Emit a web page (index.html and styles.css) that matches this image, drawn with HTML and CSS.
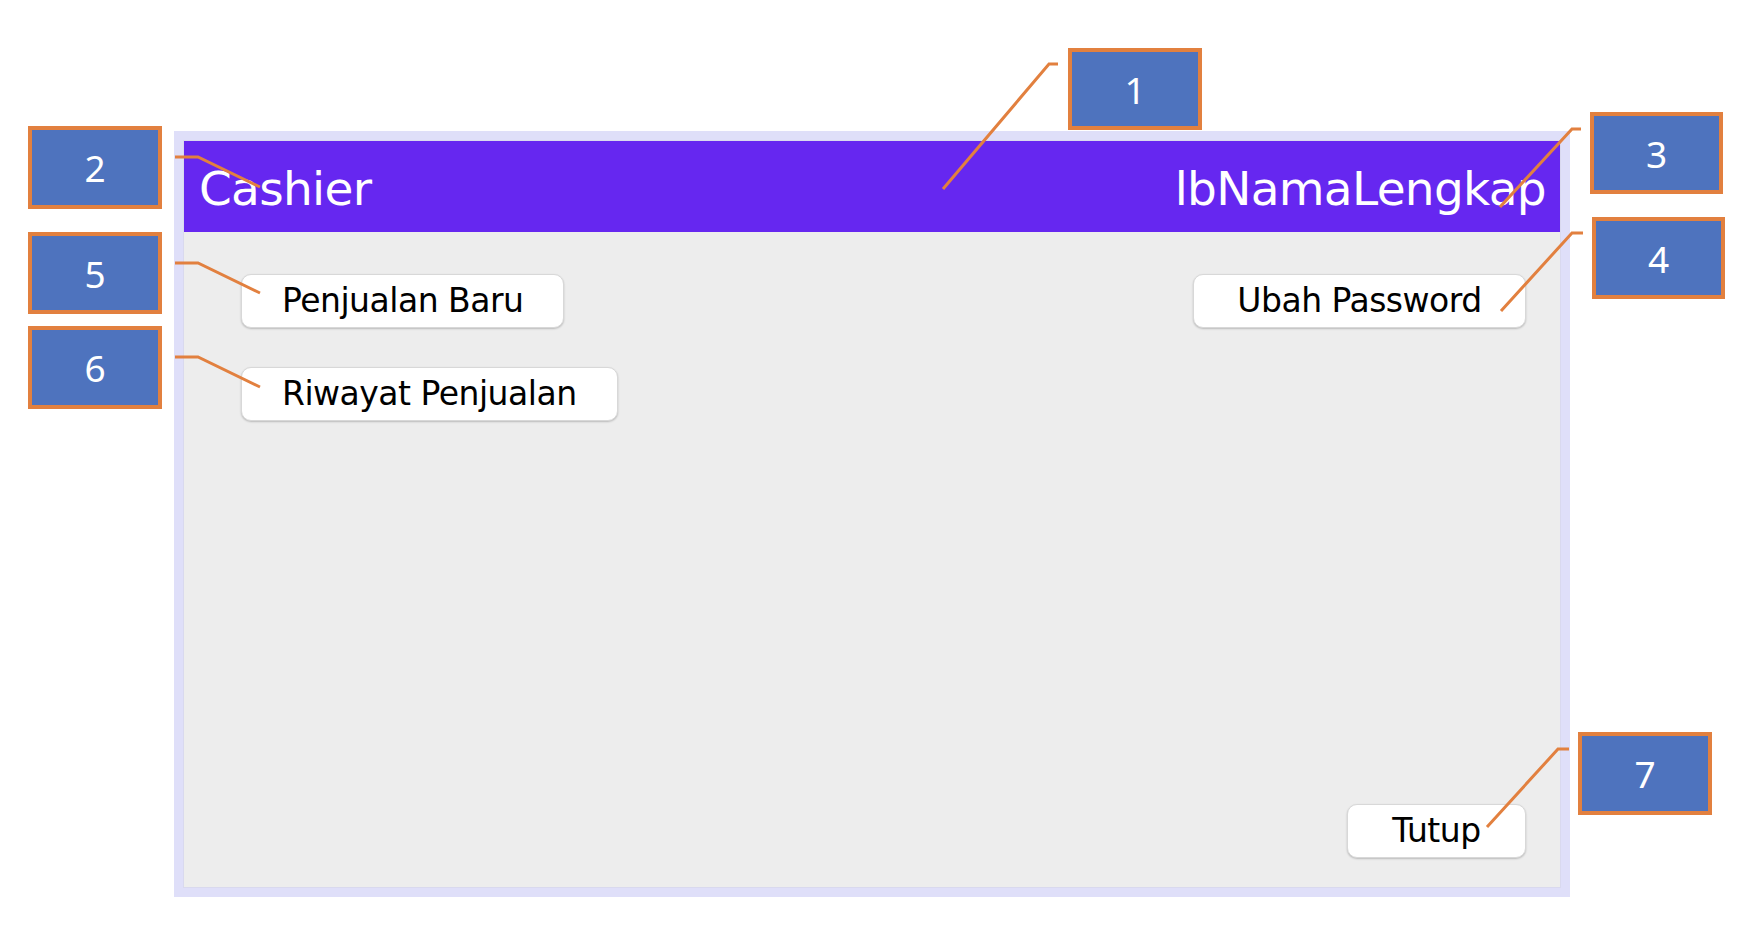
FILE: index.html
```html
<!DOCTYPE html>
<html lang="id">
<head>
<meta charset="utf-8">
<title>Cashier</title>
<link rel="stylesheet" href="styles.css">
</head>
<body>
<div class="page">
  <div class="frame">
    <div class="window">
      <header class="titlebar">
        <span class="title">Cashier</span>
        <span class="title">lbNamaLengkap</span>
      </header>
      <main class="content">
        <div class="top-row">
          <div class="left-col">
            <button class="btn">Penjualan Baru</button>
            <button class="btn">Riwayat Penjualan</button>
          </div>
          <button class="btn btn-password">Ubah Password</button>
        </div>
        <div class="bottom-row">
          <button class="btn btn-close">Tutup</button>
        </div>
      </main>
    </div>
  </div>

  <svg class="leaders" width="1758" height="932" viewBox="0 0 1758 932">
    <g fill="none" stroke="#e2803f" stroke-width="3" stroke-linejoin="miter">
      <polyline points="1058,64 1049,64 943,189"/>
      <polyline points="175,157 198,157 260,187"/>
      <polyline points="1581,129 1572,129 1500,207"/>
      <polyline points="1583,233 1572,233 1501,311"/>
      <polyline points="175,263 198,263 260,293"/>
      <polyline points="175,357 198,357 260,387"/>
      <polyline points="1569,749 1558,749 1487,827"/>
    </g>
  </svg>

  <div class="callout c1">1</div>
  <div class="callout c2">2</div>
  <div class="callout c3">3</div>
  <div class="callout c4">4</div>
  <div class="callout c5">5</div>
  <div class="callout c6">6</div>
  <div class="callout c7">7</div>
</div>
</body>
</html>
```

FILE: styles.css
```css
html, body {
  margin: 0;
  padding: 0;
  background: #ffffff;
}

.page {
  position: relative;
  width: 1758px;
  height: 932px;
  padding: 131px 0 0 174px;
  box-sizing: border-box;
  overflow: hidden;
}

.frame {
  width: 1396px;
  height: 766px;
  box-sizing: border-box;
  border: 10px solid #dfdff9;
  background: #ededed;
}

.window {
  display: flex;
  flex-direction: column;
  height: 100%;
  box-shadow: 0 0 0 1px #d9d9ee;
}

.titlebar {
  display: flex;
  justify-content: space-between;
  height: 91px;
  box-sizing: border-box;
  padding: 4px 14px 0 15px;
  background: #6627f0;
  color: #ffffff;
  font-family: "DejaVu Sans", sans-serif;
  font-size: 47px;
  letter-spacing: -0.7px;
  line-height: 87px;
  white-space: nowrap;
}

.content {
  flex: 1;
  display: flex;
  flex-direction: column;
  justify-content: space-between;
  padding: 42px 34px 29px 57px;
}

.top-row {
  display: flex;
  justify-content: space-between;
  align-items: flex-start;
}

.left-col {
  display: flex;
  flex-direction: column;
  align-items: flex-start;
  gap: 39px;
}

.bottom-row {
  display: flex;
  justify-content: flex-end;
}

.btn {
  height: 54px;
  box-sizing: border-box;
  margin: 0;
  padding: 0 40px;
  background: #ffffff;
  border: 1px solid #d8d8d8;
  border-radius: 10px;
  box-shadow: 0 1px 2px rgba(0, 0, 0, 0.22);
  color: #000000;
  font-family: "DejaVu Sans", sans-serif;
  font-size: 33px;
  letter-spacing: -0.5px;
  line-height: 52px;
  white-space: nowrap;
  cursor: default;
}

.btn-password {
  min-width: 333px;
}

.btn-close {
  min-width: 179px;
}

.leaders {
  position: absolute;
  left: 0;
  top: 0;
  pointer-events: none;
}

.callout {
  position: absolute;
  width: 134px;
  height: 82px;
  box-sizing: border-box;
  border: 4px solid #e2803f;
  background: #4e73be;
  color: #ffffff;
  display: flex;
  align-items: center;
  justify-content: center;
  font-family: "Noto Sans", sans-serif;
  font-size: 37px;
  line-height: 1;
}

.c1 { left: 1068px; top: 48px; }
.c2 { left: 28px; top: 126px; height: 83px; }
.c3 { left: 1590px; top: 112px; width: 133px; }
.c4 { left: 1592px; top: 217px; width: 133px; }
.c5 { left: 28px; top: 232px; }
.c6 { left: 28px; top: 326px; height: 83px; }
.c7 { left: 1578px; top: 732px; height: 83px; }
```
